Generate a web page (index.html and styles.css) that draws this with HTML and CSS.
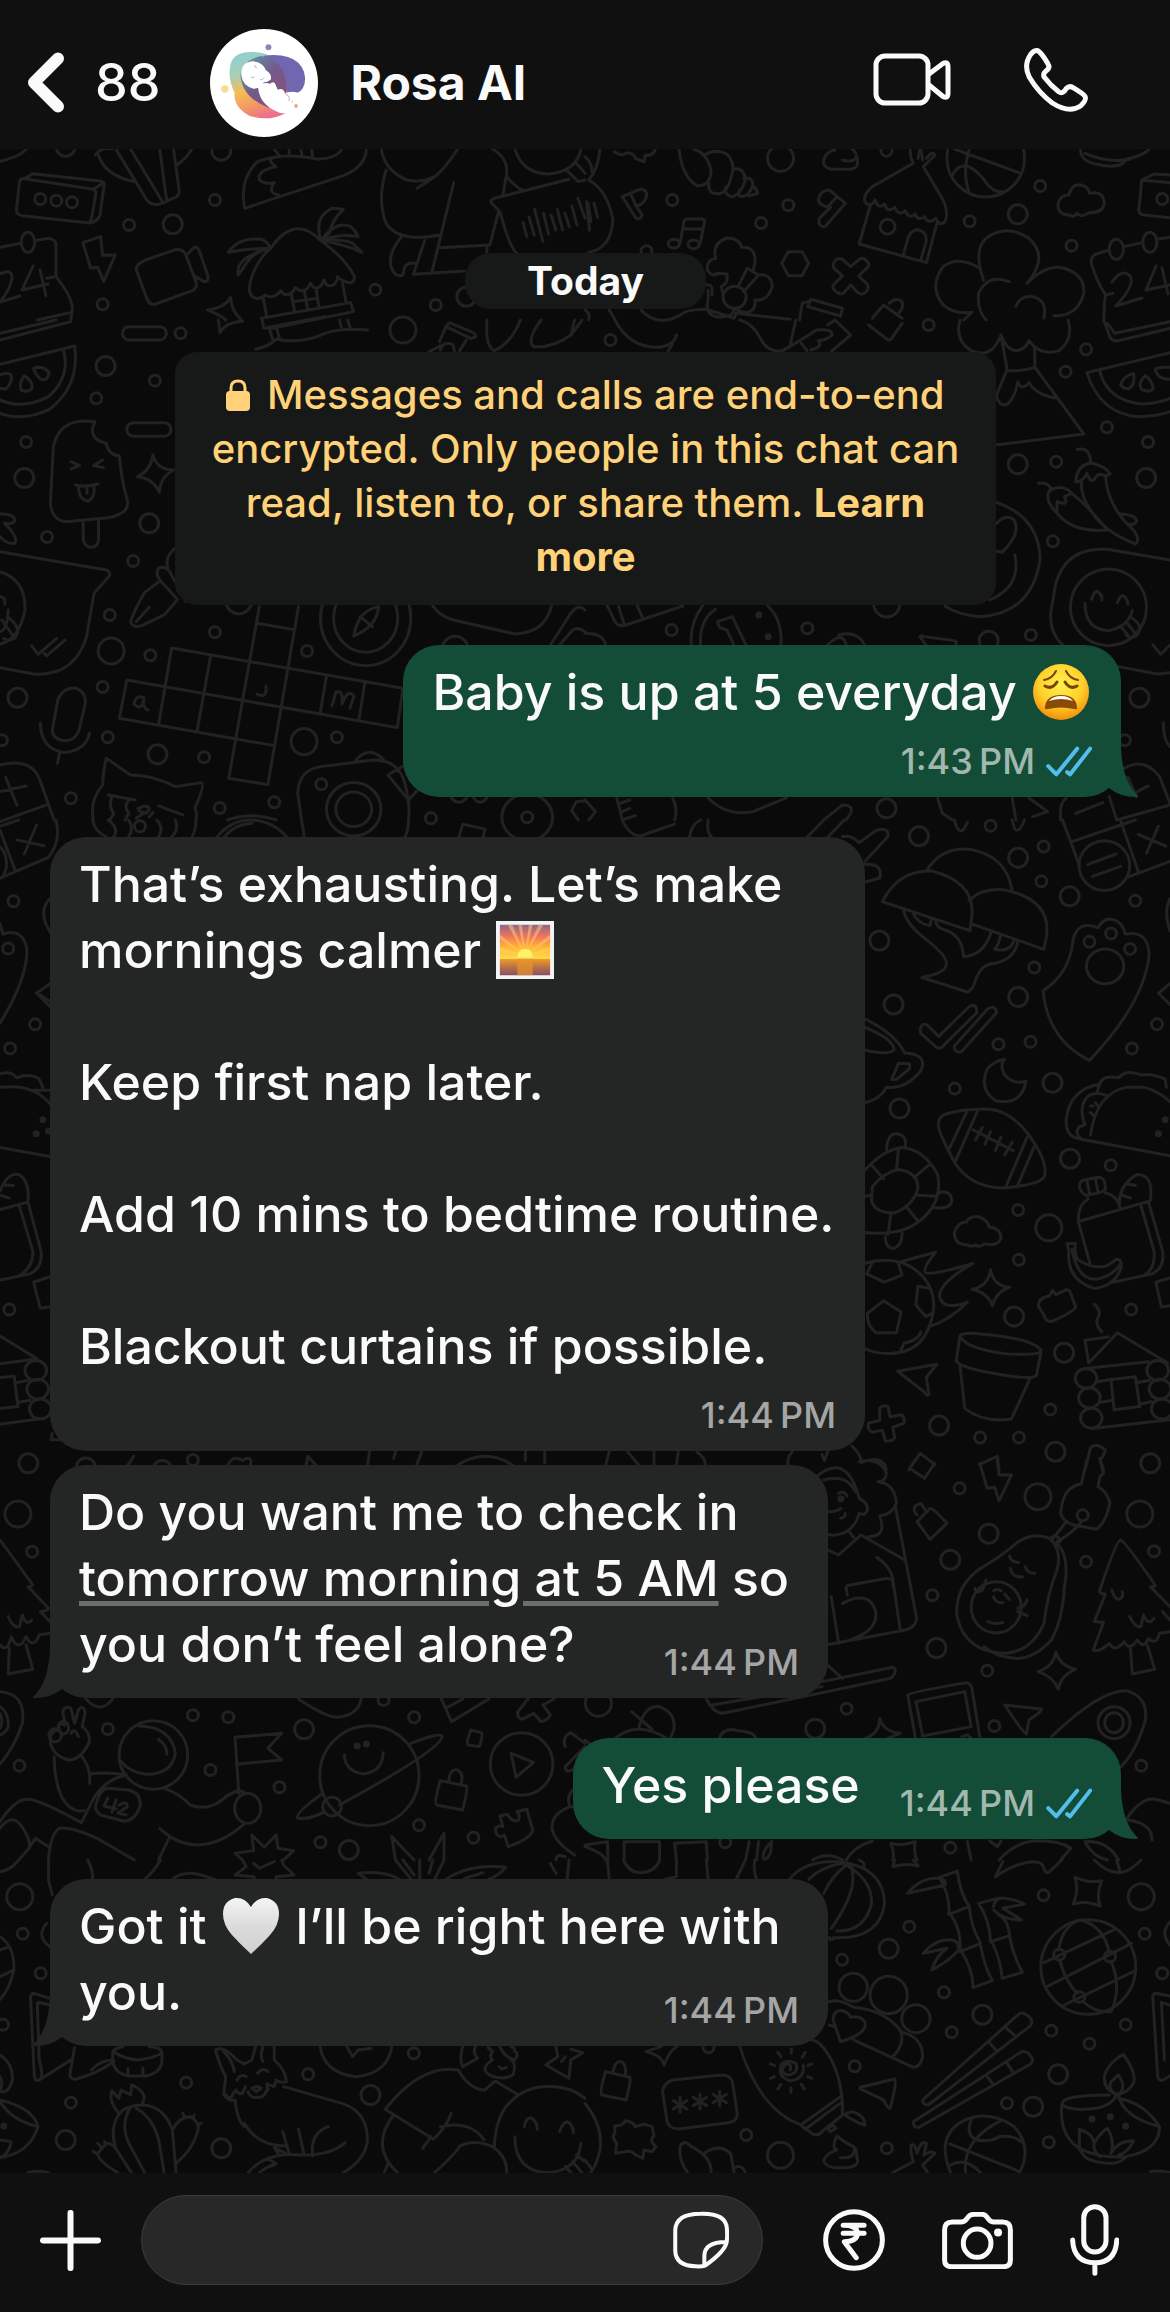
FILE: index.html
```html
<!DOCTYPE html>
<html lang="en">
<head>
<meta charset="utf-8">
<meta name="viewport" content="width=device-width, initial-scale=1">
<title>Rosa AI</title>
<link rel="stylesheet" href="styles.css">
</head>
<body>
<header class="topbar">
  <a class="back" href="#chats" aria-label="Back to chats, 88 unread">
    <svg class="icon back-icon" viewBox="28 53 37 61" aria-hidden="true"><path d="M58 59.500L34 83.500L58 107.500" stroke-width="12"/></svg>
    <span class="unread">88</span>
  </a>
  <svg class="avatar" viewBox="568 84 290 324" preserveAspectRatio="none" role="img" aria-label="Rosa AI profile picture">
    <defs>
      <linearGradient id="crescent" x1="0.2" y1="0" x2="0.5" y2="1"><stop offset="0" stop-color="#8ecfd2"/><stop offset=".3" stop-color="#a8cfb4"/><stop offset=".55" stop-color="#f5bd52"/><stop offset=".78" stop-color="#f39a62"/><stop offset="1" stop-color="#ec6f8d"/></linearGradient>
      <linearGradient id="dusk" x1="0" y1="0" x2="1" y2="1"><stop offset="0" stop-color="#5aa3a6"/><stop offset=".5" stop-color="#72598c"/><stop offset="1" stop-color="#8f4d74"/></linearGradient>
    </defs>
    <ellipse cx="713" cy="246" rx="145" ry="162" fill="#fff"/>
    <path d="M622 200Q625 150 685 153Q725 156 735 172L790 300L768 338Q725 362 675 345Q630 318 634 275Q616 235 622 200Z" fill="url(#crescent)"/>
    <path d="M712 164Q775 155 805 185Q828 210 822 248Q815 278 790 277L745 262Z" fill="#6f67b0"/>
    <path d="M650 225Q650 180 705 165Q745 170 765 210Q778 250 770 285L725 320Q655 290 650 225Z" fill="url(#dusk)"/>
    <path d="M652 222Q650 182 685 181Q712 185 718 208Q735 218 731 236Q722 244 712 244Q710 262 685 263Q655 255 652 222Z" fill="#fff"/>
    <path d="M697 258Q708 242 730 248Q734 240 742 246L750 266Q765 258 770 278Q785 268 805 276Q812 282 790 296Q782 310 790 330Q765 345 740 328Q700 305 697 258Z" fill="#fff"/>
    <path d="M678 228Q683 233 688 227M703 236Q709 238 712 232M686 193Q694 196 692 202M772 280Q784 285 780 300" fill="none" stroke="#9b84ad" stroke-width="2"/>
    <ellipse cx="725" cy="139" rx="8" ry="9" fill="#8b86bd"/><ellipse cx="608" cy="264" rx="10" ry="11" fill="#f8dc96"/><ellipse cx="799" cy="315" rx="5" ry="6" fill="#f3a489"/>
  </svg>
  <h1 class="name">Rosa AI</h1>
  <button class="plain" type="button" aria-label="Video call">
    <svg class="icon" width="79" height="56" viewBox="873 51 79 56" aria-hidden="true"><g stroke-width="5"><rect x="876" y="55" width="52" height="47" rx="9"/><path d="M929 73L943 62.500Q948 60 948 66V92Q948 98 943 95.500L929 84"/></g></svg>
  </button>
  <button class="plain" type="button" aria-label="Voice call">
    <svg class="icon fit" width="64" height="64" viewBox="1176 141 172 192" preserveAspectRatio="none" aria-hidden="true"><path stroke-width="5" d="M1213 149Q1204 146 1194 160Q1174 192 1190 228Q1215 275 1252 306Q1297 338 1328 315Q1345 297 1340 286Q1335 278 1308 260Q1298 253 1290 262Q1280 280 1270 273Q1248 254 1230 228Q1226 218 1235 210Q1247 200 1241 190Q1225 158 1213 149Z"/></svg>
  </button>
</header>

<main class="chat">
  <svg class="wallpaper" viewBox="0 149 1170 2024" preserveAspectRatio="xMidYMin slice" aria-hidden="true">
    <g transform="scale(.3731 .3333)">
      <path d="M0 485Q20 478 40 470T72 445M66 536L88 521L268 543Q280 546 279 556L268 645Q262 665 240 669L60 647Q43 643 44 630L52 548Q54 534 66 536L250 568Q258 571 257 580L248 640Q246 655 240 669M250 568L279 548M256 465Q270 440 300 447M264 465Q280 525 358 545M312 450L388 590Q400 620 430 612L470 592Q482 585 480 570L465 447M350 447L436 606M428 447L447 604M474 495Q500 475 514 447"/>
      <path d="M656 625Q640 540 690 485Q760 455 850 478Q900 475 915 450M656 625L920 527Q980 500 982 447M695 540Q690 510 740 500Q715 480 730 475M695 540Q710 555 735 548Q715 580 748 585M735 447L750 470M775 447V468M806 447L810 470M835 447L838 472M222 728L270 710L275 766L309 765L278 844L262 802L243 805Z"/>
      <path d="M375 790Q362 800 367 815L395 900Q403 918 420 911L515 872Q530 865 525 845L498 765Q490 745 470 749L390 780ZM500 765L520 742Q530 740 534 752L558 830Q558 845 547 845L524 830M0 742L55 730M95 722L130 715Q152 718 150 740V830L125 835M150 830Q200 900 193 935L190 958M188 938L100 960"/>
      <ellipse cx="75" cy="727" rx="18" ry="30"/>
      <path d="M725 745Q790 640 860 722Q930 780 950 830Q950 850 935 848Q910 840 905 830Q900 865 875 855L868 840Q860 870 840 862L832 850Q820 880 800 870L792 862Q780 890 760 882L752 872Q735 900 710 885Q700 900 680 893Q660 880 675 830Q690 780 725 745ZM705 890L715 950M780 880L790 935M848 870L855 925M918 850L928 910M785 905L852 895M815 870L825 930M700 955L940 908L947 935L730 985M725 745Q670 745 612 757Q640 710 700 718Q715 722 725 745Q680 755 660 790Q650 810 638 825Q630 770 725 745M860 722Q840 650 890 625L920 628Q890 660 882 700L860 722Q900 660 940 680Q955 695 960 710Q910 700 860 722Q920 715 945 730L970 757Q930 735 860 722M556 930Q600 925 618 893Q620 930 645 958M556 930Q590 945 605 960"/>
      <path d="M1022 447Q1030 510 1090 540Q1130 550 1165 530Q1190 510 1225 450M1165 530L1118 565M1035 510Q1010 600 1035 670Q1070 730 1180 705M1216 548L1158 815M1108 823L1245 813M1108 823L1138 722M1075 712Q1040 760 1048 800Q1060 835 1080 825L1085 800Q1095 785 1115 790M1320 447Q1370 480 1355 540L1348 585M1335 640L1313 735L1180 743M1305 740V755M1380 447Q1400 520 1470 522Q1545 515 1557 447M1520 512L1550 545L1568 540M1545 490L1568 520M1358 530Q1380 560 1400 570M1340 635L1318 610Q1310 600 1325 595L1525 538M1340 635Q1365 740 1385 760M1402 668L1412 710M1418 652L1432 705M1433 628L1455 725M1457 640L1470 702M1477 645L1490 690M1494 628L1508 690M1514 640L1526 680M1533 618L1546 675M1549 595L1568 655"/>
      <path id="s1" d="M108 597h0M151 602h0M193 607h0M576 600h0M346 675h0M275 913h0M1006 869h0M1168 915h0"/>
      <path id="m1" d="M463 673h0M593 452h0M1250 890h0M176 440h0"/>
    </g>
    <g transform="translate(585 0) scale(.3731 .3333)">
      <path d="M10 540Q60 570 75 660Q70 745 10 757M4 605L12 690M8 610L16 665M24 610L34 652M40 447Q35 510 10 540M0 470Q20 490 18 515M78 455Q100 470 108 460Q130 455 135 475L158 485L162 465Q180 470 188 450M252 447Q260 530 300 557Q335 560 338 515Q330 460 290 447M320 465Q350 445 380 462Q405 490 392 530Q380 590 345 580Q330 575 332 550M398 508Q425 500 430 540Q415 590 390 590Q370 580 378 560M425 535Q450 530 450 555Q440 590 420 590Q405 585 415 570M450 558Q460 565 463 580L440 588"/>
      <path d="M100 590L150 567Q170 570 163 595Q155 615 137 618L153 645Q150 660 137 655ZM122 582L137 618M255 730L265 665Q266 657 275 657H315Q321 658 320 668L308 735M262 687H316M690 480Q720 490 728 470Q725 450 715 447M728 470Q740 510 700 508H660Q635 500 640 480Q645 455 670 450M625 600Q630 570 655 570L698 610L645 678Q635 685 627 670L628 655L658 622Q630 620 625 600ZM675 590L650 622"/>
      <ellipse cx="238" cy="731" rx="15" ry="13"/><ellipse cx="291" cy="733" rx="15" ry="13"/>
      <path d="M880 490L770 560Q740 590 753 610Q770 620 778 600Q785 630 803 612Q810 640 830 622Q840 650 858 632Q868 660 885 642Q892 665 910 650Q920 675 940 655Q950 680 965 665Q975 640 960 600L907 500M765 615L735 732L915 788L943 670M853 765L867 710Q885 675 910 700Q918 715 912 735L900 780M872 450Q870 470 880 490M907 500L938 465Q930 450 915 475M893 475L897 447M900 447L905 480"/>
      <ellipse cx="811" cy="680" rx="20" ry="22"/><ellipse cx="1074" cy="475" rx="104" ry="116"/>
      <path d="M990 447L1168 520M1030 447Q1010 520 1030 578M985 525Q1000 490 1030 500Q1060 520 1080 555Q1100 580 1125 575M1300 645Q1265 645 1268 610Q1275 585 1297 585Q1305 550 1330 555Q1350 560 1352 580Q1390 570 1392 610Q1388 640 1350 638Q1330 655 1320 640Q1305 655 1300 645ZM1328 450Q1330 485 1370 492Q1410 505 1440 492L1450 478Q1500 465 1512 447M1340 460Q1400 490 1460 478M1568 525L1525 522L1492 540Q1488 600 1484 630Q1485 645 1500 645L1568 653M1492 540L1568 548M1405 750L1370 762Q1355 770 1357 790Q1370 840 1395 885Q1390 920 1391 960M1445 740L1492 728M1530 718L1568 712M1395 885L1415 880"/>
      <ellipse cx="1424" cy="748" rx="19" ry="30"/><ellipse cx="1514" cy="727" rx="19" ry="30"/>
      <path d="M1068 840Q1040 750 1075 715Q1130 670 1190 715Q1245 770 1185 850Q1230 800 1270 802Q1340 815 1337 880Q1320 950 1257 947M1058 805Q1000 765 960 800Q920 860 960 915Q990 945 1037 937L1015 960M1137 845Q1080 820 1055 880Q1050 930 1075 960M1155 920Q1165 885 1200 890Q1240 900 1230 955M545 755H582L599 790L582 827H545L527 790ZM690 778L712 800L735 778Q745 770 757 785Q765 795 755 805L733 828L757 853Q763 865 752 877Q742 887 730 877L712 855L692 880Q680 885 668 870Q660 860 670 850L690 828L668 805Q660 795 672 780Q682 772 690 778Z"/>
      <ellipse cx="401" cy="892" rx="31" ry="33"/>
      <path d="M350 775Q340 730 380 714Q415 715 420 742Q460 740 455 790L450 815M350 775Q325 780 328 810Q335 825 350 825M352 820L380 822Q385 850 365 860L370 880M325 855Q345 850 340 885M410 860L435 805L465 825L425 875M465 825Q500 820 502 860Q490 905 455 900Q460 935 430 938Q400 930 400 925M400 930Q395 955 350 950Q320 940 330 900V870M150 930Q200 990 270 935Q320 920 345 935L400 955L405 940L550 958M575 960L582 910L598 905M605 898L690 925L685 948L597 920ZM770 955L800 915L850 955M815 910Q835 890 850 905Q855 925 840 940M0 930Q15 940 10 960M65 930L80 958"/>
      <path id="s2" d="M234 600h0M472 669h0M545 616h0M1031 664h0M1220 558h0M1304 737h0M808 452h0M165 754h0M1547 597h0"/>
      <path id="m2" d="M1160 643h0"/>
      <path id="l2" d="M524 475h0"/>
    </g>
    <g transform="translate(0 320) scale(.3731 .3333)">
      <path d="M0 40L150 0M0 60L190 5M0 133L200 78Q215 200 130 270Q60 305 0 280M170 90Q190 170 130 230Q60 270 0 240M0 165Q20 155 30 165Q35 185 15 208L0 205M65 167Q90 185 85 205Q75 220 57 210Q50 190 65 167ZM90 145Q120 135 132 160Q125 185 110 178Q95 165 90 145Z"/>
      <rect x="328" y="20" width="118" height="40" rx="18" ry="20"/><rect x="340" y="308" width="118" height="41" rx="18" ry="20"/>
      <path d="M254 305Q160 290 143 380L135 550Q140 610 190 604L290 593Q350 580 341 540Q325 480 320 408Q290 405 285 370Q245 360 248 325ZM223 602V660Q230 683 245 682Q262 680 264 660V597M190 425L213 437L191 447M275 420L251 437L277 443M202 495Q230 503 263 492M210 500Q212 540 235 543Q255 535 252 500M233 505V520M410 405Q420 450 466 450Q430 470 427 517Q410 475 369 470Q405 450 410 405ZM0 582Q35 580 40 600Q35 615 12 610M12 610Q50 650 40 670Q20 675 0 650"/>
      <path d="M0 695L285 750Q300 758 290 772L252 820L232 950Q200 1070 90 1062L0 1043M85 978L102 1003L152 955M118 1000L125 1008L175 960M0 755Q70 780 67 870Q50 960 0 972M0 830Q15 830 13 852M22 870Q20 930 0 935M5 900L40 955M20 890Q55 920 45 945Q30 970 10 955M470 685Q440 710 450 745M425 745Q440 735 455 755L498 845M425 745Q415 760 430 782L475 838M430 782L387 818Q360 870 350 905Q355 925 380 917L440 885L475 840M365 905L400 862"/>
      <path d="M585 0L590 38Q600 10 650 3M685 88Q720 80 740 58Q800 70 850 50Q900 20 985 30M722 25L733 65M740 20L750 58M703 0L707 25L870 -10M910 0L915 22M932 0L938 22M1205 8L1268 38Q1285 50 1262 55L1195 20ZM1195 20L1178 65M1250 60L1232 92M1150 95L1185 75M1180 90Q1190 60 1215 75L1218 95M1305 0Q1300 80 1325 92Q1370 70 1395 0M1450 0Q1410 60 1430 80Q1480 85 1530 45Q1555 10 1560 0M1530 45L1540 0"/>
      <path d="M460 984L1080 1105L1065 1223L340 1080L320 1195L735 1277M460 984L425 1215M565 1005L528 1235M695 860L613 1375L718 1394L800 860M690 910L788 929M875 1068L858 1180M978 1088L962 1200M140 1230L155 1140Q170 1100 205 1105Q235 1120 227 1160L212 1230Q200 1265 170 1262Q140 1255 140 1230ZM108 1210Q110 1290 175 1298Q230 1290 240 1240M160 1298L154 1330M0 1335Q90 1310 110 1390L145 1500M0 1415L70 1398M15 1372L45 1455M0 1505L125 1455"/>
      <path d="M250 1500Q240 1440 275 1395Q278 1340 285 1315L350 1365Q410 1365 470 1400L540 1388Q550 1395 522 1465Q530 1480 525 1500M290 1425L362 1440M425 1458L490 1485M300 1430Q290 1460 305 1480L295 1500M345 1440Q330 1460 345 1480L335 1500M370 1465Q400 1450 400 1470L390 1480Q370 1475 370 1465M385 1480L365 1495M400 1490L410 1478M610 1500Q675 1475 740 1500"/>
      <ellipse cx="980" cy="895" rx="121" ry="142"/><ellipse cx="980" cy="895" rx="86" ry="102"/><ellipse cx="948" cy="1468" rx="73" ry="80"/><ellipse cx="948" cy="1468" rx="48" ry="52"/><ellipse cx="1413" cy="1492" rx="68" ry="70"/>
      <path d="M1015 860Q960 870 948 948Q1010 920 1015 860M965 890L998 920M1160 858Q1180 890 1215 900L1380 942Q1460 940 1478 858M1475 975L1530 880Q1550 850 1568 870M1500 975L1535 930Q1550 920 1568 935M808 1500L798 1420Q800 1350 860 1340L1000 1320Q1070 1320 1085 1390Q1100 1450 1095 1500M950 1325Q990 1270 1030 1322M1085 1335L1040 1365L1095 1440L1118 1412M1210 1434Q1230 1460 1250 1434M1270 1434Q1285 1460 1305 1434M1568 1443L1545 1445L1532 1472L1550 1500"/>
      <path id="s3" d="M484 40h0M415 182h0M258 235h0M70 366h0M126 651h0M357 723h0M294 885h0M576 937h0M403 1006h0M275 1101h0M289 1252h0M547 1312h0M903 1252h0M823 993h0M190 1435h0M589 1464h0M735 1447h0M5 1261h0M861 1393h0M1413 1492h0M1155 1495h0"/>
      <path id="m3" d="M283 138h0M65 474h0M400 610h0M47 1133h0M422 1303h0"/>
      <path id="l3" d="M1080 30h0M298 993h0M815 1265h0M1220 988h0M640 842h0"/>
    </g>
    <g transform="translate(585 320) scale(.3731 .3333)">
      <path d="M80 0Q120 85 200 82Q240 75 245 45M235 70L222 95M415 0Q450 10 470 55Q490 100 530 92Q580 60 620 30Q665 25 662 45Q650 60 625 62Q640 80 605 90M565 0L550 75M650 15L670 0L712 45L660 95M580 70L595 92M760 15L812 60Q820 62 825 50L850 10M1005 0Q990 60 1035 92Q1090 120 1115 45Q1130 90 1155 92Q1180 90 1190 62Q1220 110 1270 92Q1310 60 1295 0M1115 45L1132 152Q1170 155 1206 142L1205 85M1130 152L1103 225Q1110 265 1135 250Q1155 225 1160 185Q1170 215 1190 188Q1210 225 1265 235M1206 142L1337 342L1100 375"/>
      <path d="M1390 0L1405 45Q1410 65 1430 62L1568 25M1568 5L1420 40L1400 10M1345 158L1568 98M1345 158Q1380 280 1480 290Q1530 290 1568 275M1380 155Q1400 240 1490 252Q1540 250 1568 235M1470 160Q1440 170 1436 195Q1450 215 1465 200Q1475 180 1470 160ZM1502 167Q1480 190 1492 208Q1515 220 1523 205Q1520 180 1502 167ZM1568 142Q1535 140 1528 148Q1535 178 1568 178M1320 388Q1355 380 1355 430M1315 485Q1320 430 1360 430Q1395 440 1408 462L1395 468Q1400 560 1470 630Q1490 660 1475 672Q1380 630 1350 560Q1330 530 1330 485M1315 485Q1335 485 1345 460Q1355 490 1365 478Q1375 455 1395 468M1215 490Q1240 485 1250 508M1265 580Q1230 540 1245 512Q1280 490 1305 520L1285 530Q1300 560 1265 545ZM1305 520Q1350 560 1400 630Q1310 640 1265 580M1435 582Q1480 585 1478 605Q1470 618 1455 612"/>
      <path d="M1103 547Q1215 590 1220 715Q1200 880 1060 890Q1000 885 965 858M1103 610Q1130 580 1150 600Q1170 640 1118 697L1103 693M1152 705Q1170 800 1085 840M1568 720L1400 688Q1290 680 1262 790L1248 880Q1245 940 1282 977M1430 1040L1535 1062L1568 1058M1522 975L1543 1003L1568 975M1358 838Q1365 810 1375 815Q1388 825 1385 840M1427 848Q1435 820 1447 830Q1455 840 1455 852M1340 850Q1340 930 1405 932Q1455 920 1467 872M1435 918L1462 955M1450 905L1478 945M1465 893Q1500 920 1480 945Q1465 960 1450 945"/>
      <ellipse cx="1403" cy="862" rx="102" ry="115"/>
      <path d="M285 977Q280 910 315 858M310 977Q305 900 350 868M525 977Q530 900 490 858M355 905L395 890L432 977M355 905L360 922L380 930L400 977M60 858L80 905Q90 922 110 915L262 858M90 860L105 912M140 858L155 895M0 940Q50 940 55 975M650 975Q690 930 700 975M680 945Q730 930 750 975M898 950Q900 945 910 950L990 962Q1000 965 992 975M898 950L915 977M1550 1208Q1550 1260 1568 1280M1445 1345Q1500 1310 1540 1370L1568 1450M1405 1430L1425 1500L1568 1455M1455 1372L1478 1430M1480 1415L1510 1398M1315 1480L1388 1448M1275 1500Q1270 1450 1290 1434M0 1440L28 1475L10 1500M85 1434L100 1500M95 1450L120 1440M100 1475L120 1465M105 1498L135 1487M235 1434Q250 1470 240 1500M330 1434Q380 1490 450 1475L540 1434M640 1500L690 1455Q720 1455 712 1480L700 1500M945 1434L958 1480L985 1500M1145 1434L1155 1500M1190 1434L1240 1475L1200 1490"/>
      <path class="dot" d="M466 885h0M491 950h0"/>
      <path id="s4" d="M68 60h0M921 15h0M1343 88h0M1288 155h0M1399 322h0M1263 425h0M1509 366h0M1254 664h0M232 930h0M596 925h0M1195 945h0M1447 1261h0"/>
      <path id="m4" d="M1160 433h0M1504 474h0M1486 1133h0M1082 962h0M808 1465h0"/>
      <path id="l4" d="M809 852h0"/>
    </g>
    <g transform="translate(0 820) scale(.3731 .4145)">
      <path d="M0 15L50 0M40 120L0 25M150 0Q165 50 130 90L0 140M0 65Q20 80 17 115L8 138M45 48L118 62M98 12L65 82M134 190Q100 220 134 270M0 250L8 275Q60 260 72 310Q75 380 0 490M134 395L98 418L134 450M108 422L134 438M0 612Q30 605 45 622Q80 610 105 625L115 645M90 652H134M0 645Q90 635 134 685M0 790L134 812M0 895Q20 850 50 855Q80 870 75 920M10 880L35 882M0 905L25 912M0 940L75 922L110 1040Q115 1080 80 1095L0 1110M52 932L88 1040Q90 1080 50 1100M134 1102L90 1115L108 1178L134 1175M0 1245L100 1300L0 1312M0 1458L120 1443M0 1345L38 1342L48 1415L0 1420M40 1358L75 1352M48 1405L80 1400M140 1480L137 1495H160"/>
      <path d="M248 0Q255 30 285 40M290 0Q320 20 305 40M345 0Q360 20 345 40M420 0Q440 20 425 40M470 0Q480 25 460 40M525 0Q525 25 515 40M580 42Q620 0 670 0Q730 0 770 42M600 42Q630 10 675 8M808 0Q815 30 815 42M1095 0Q1095 25 1085 42M1230 42L1240 10L1300 22L1295 42M340 1560L358 1535M610 1560Q620 1530 650 1545Q680 1530 670 1560M820 1560L825 1535L850 1560M985 1560L990 1525M1055 1540L1060 1525M1115 1560L1130 1525M1220 1560Q1300 1510 1380 1560M1408 1525V1545M1460 1525V1550"/>
      <ellipse cx="96" cy="1328" rx="29" ry="24"/><ellipse cx="101" cy="1373" rx="29" ry="24"/><ellipse cx="108" cy="1421" rx="29" ry="24"/>
      <path class="dot" d="M115 723h0M97 757h0M130 750h0"/>
      <path id="s5" d="M36 196h0M22 310h0M94 493h0M27 551h0M25 1181h0M375 15h0M517 1544h0"/>
      <path id="m5" d="M76 1552h0M230 1562h0M435 1568h0"/>
    </g>
    <g transform="translate(585 820) scale(.3731 .4145)">
      <path d="M797 197Q840 120 930 123Q1045 150 1037 230L1032 267ZM915 122Q960 60 1040 72Q1130 90 1144 168M1030 195Q1060 165 1120 168Q1250 190 1237 280L1230 312L1040 252M853 215Q860 250 910 285Q975 330 968 350Q965 370 903 380L1025 415Q1040 410 1045 390Q1060 350 1090 347Q1150 340 1160 293M940 243Q940 260 970 267Q1010 280 1015 330Q1070 325 1088 272M877 220Q890 250 925 255L928 238M1113 280Q1110 300 1098 312Q1140 320 1150 290M595 42L640 0M650 42L695 0M690 40Q715 35 735 55L780 25Q815 15 812 40L750 100M750 107Q800 105 790 140L750 150"/>
      <path d="M898 505Q905 485 920 497L948 522L1030 450Q1050 440 1050 465L960 545Q950 555 940 547L900 515ZM990 545L1080 455Q1100 445 1103 465L1010 558Q990 565 990 545ZM750 480Q830 515 857 562Q920 565 900 605Q860 650 808 645Q790 675 750 682M750 500Q830 530 828 555Q810 568 750 555M840 587L870 588V600L835 626H822ZM1125 577Q1100 580 1078 600Q1055 650 1100 677Q1170 690 1182 630Q1150 640 1125 615Q1110 590 1125 577ZM1228 412Q1300 370 1308 290Q1320 240 1375 260Q1390 235 1415 240Q1440 245 1448 275Q1510 265 1512 325Q1500 440 1352 580Q1240 530 1228 412ZM1568 395L1537 418L1568 445"/>
      <ellipse cx="1394" cy="353" rx="50" ry="42"/><ellipse cx="1392" cy="110" rx="68" ry="60"/>
      <path d="M1280 0L1325 110M1305 52L1475 0M1435 0L1483 125M1455 138L1568 100M1483 35L1557 63M1537 15L1505 80M1348 107L1423 82M1360 136L1436 112M1568 190Q1550 220 1568 268M990 0Q1005 50 1025 5M1145 0Q1155 50 1178 0M100 0Q120 40 150 38L240 10M280 42Q285 10 310 0M330 0Q325 30 340 42M960 712Q1000 697 1080 697Q1140 700 1190 760Q1245 830 1230 862Q1215 880 1120 888Q1030 885 990 825Q945 750 947 735Q948 718 960 712ZM1023 705L975 795M1053 700L992 825M1185 765L1128 885M1203 790L1158 885M1040 747L1148 798M1065 742L1047 772M1087 752L1072 782M1115 765L1100 797M1145 777L1125 808"/>
      <path d="M1330 770Q1285 765 1290 720Q1300 650 1380 637Q1385 615 1430 622Q1450 600 1490 615Q1520 610 1555 625L1558 645M1330 770L1568 810M1355 760Q1370 660 1450 645H1500Q1540 655 1568 680M1380 637Q1370 660 1375 660M1330 770Q1310 755 1325 740L1340 735Q1320 690 1350 665Q1370 655 1400 665M1355 690H1362M1368 682L1375 690M1355 706L1362 712M750 845Q800 795 850 790Q910 795 945 855Q960 920 900 965Q850 1005 750 995M808 795Q812 755 835 757Q865 760 858 792M945 900Q980 890 983 918Q980 940 935 935M805 1005Q805 1035 830 1033Q850 1025 850 995M770 885Q800 850 840 843Q895 850 892 890Q880 930 830 948Q780 950 768 920ZM835 842L840 795M882 862L925 830M892 905L940 908M860 932L890 965M820 950L812 1000M768 905L750 908M800 865L770 835"/>
      <path d="M750 1070Q800 1055 850 1068Q935 1100 935 1175Q920 1290 810 1287Q775 1287 750 1275M770 1068L755 1095L802 1115L850 1098L840 1070M757 1190L800 1160L847 1187L835 1237H780Q755 1220 757 1190M925 1130L892 1125L887 1170L913 1198L930 1190M845 1283L855 1262Q895 1255 900 1235M850 1065Q890 1055 940 1043Q905 1080 912 1092Q925 1100 1040 1070Q950 1115 950 1150Q960 1185 1025 1163Q980 1205 930 1220M1025 1025Q990 1025 990 995Q1000 970 1022 970Q1030 955 1055 957Q1080 965 1083 982Q1115 985 1115 1010Q1105 1030 1070 1022Q1060 1033 1045 1025Q1035 1032 1025 1025ZM1087 1085Q1095 1125 1138 1127Q1100 1140 1092 1172Q1080 1140 1038 1132Q1080 1125 1087 1085ZM1218 1160Q1230 1150 1245 1148L1253 1135L1262 1145L1290 1133Q1300 1133 1303 1145L1315 1175Q1312 1185 1250 1210Q1235 1210 1232 1198L1215 1172Z"/>
      <path d="M1325 885Q1325 870 1340 868L1375 862Q1390 862 1393 875L1395 890Q1390 900 1342 905Q1330 900 1325 885ZM1345 870L1352 900M1368 865L1375 897M1345 905L1348 915Q1320 930 1322 968L1355 1075M1395 900Q1425 905 1435 935M1325 968L1510 920L1548 1040Q1555 1080 1520 1095L1415 1115M1490 930L1525 1040Q1530 1080 1500 1098M1432 932Q1430 880 1480 855Q1525 855 1515 918M1455 878L1475 882M1438 905L1462 912M1292 1022H1315Q1310 1040 1320 1060Q1360 1085 1400 1075L1425 1060Q1440 1060 1437 1080Q1420 1125 1365 1130Q1290 1110 1297 1040ZM1305 1035Q1320 1110 1370 1108Q1415 1100 1437 1070M1365 1168Q1385 1185 1375 1200Q1365 1215 1385 1235M1568 1105L1530 1115L1545 1175L1568 1172"/>
      <path d="M1005 1245Q1010 1235 1060 1240Q1200 1250 1223 1280L1210 1340Q1200 1350 1130 1340Q1010 1325 995 1305ZM1005 1245Q1020 1275 1130 1288Q1220 1292 1223 1280M1005 1315L1018 1420Q1070 1455 1143 1445L1193 1347M838 1330L943 1313L915 1345L922 1387Q915 1390 910 1380ZM790 1418Q800 1410 812 1415L818 1440L848 1435Q858 1440 855 1455L825 1465L830 1490Q825 1500 805 1498L797 1472L770 1477Q755 1470 760 1455L790 1448ZM1350 1310L1427 1237L1562 1310M1350 1310L1340 1255L1403 1247M1340 1323L1510 1307M1360 1468L1568 1447M1372 1355L1410 1350M1380 1405L1415 1400M1480 1357L1512 1352M1485 1410L1518 1403M1410 1350L1475 1343L1487 1415L1418 1423Z"/>
      <ellipse cx="1343" cy="1347" rx="29" ry="24"/><ellipse cx="1352" cy="1394" rx="29" ry="24"/><ellipse cx="1357" cy="1443" rx="29" ry="24"/><ellipse cx="1535" cy="1328" rx="29" ry="24"/><ellipse cx="1541" cy="1373" rx="29" ry="24"/><ellipse cx="1547" cy="1421" rx="29" ry="24"/>
      <path d="M868 1568L898 1528L938 1555M1057 1555L1105 1535L1110 1568M1340 1568L1355 1515Q1370 1500 1395 1520Q1385 1545 1380 1540L1390 1568M715 1510Q740 1530 740 1550Q800 1530 808 1568M635 1530L642 1545L650 1525M545 1557Q540 1540 555 1525M55 1557Q60 1540 65 1525M115 1525L145 1557M185 1525V1557M245 1557L250 1525M300 1525Q325 1540 322 1557"/>
      <path class="dot" d="M1555 723h0M1537 757h0"/>
      <path id="s6" d="M1087 14h0M1229 64h0M1223 148h0M1475 195h0M1204 356h0M1108 541h0M1194 535h0M991 648h0M1533 493h0M1466 551h0M1161 941h0M1409 833h0M1163 1061h0M1464 1181h0M1247 1422h0M1163 1490h0M1059 1490h0M1352 294h0M1410 274h0M1461 311h0"/>
      <path id="m6" d="M895 39h0M1161 91h0M1299 184h0M789 291h0M1161 427h0M827 445h0M843 696h0M1253 634h0M1300 817h0M1150 1198h0M1284 1285h0M949 1461h0M1261 1524h0M1515 1552h0"/>
      <path id="l6" d="M1243 984h0"/>
    </g>
    <g transform="translate(0 1460) scale(.3731 .3333)">
      <path d="M0 240L85 370Q90 380 75 380L130 445Q125 455 108 455L134 485M22 470Q35 505 52 500L60 465Q70 500 85 480M0 555Q20 580 30 530Q50 580 70 530Q90 570 105 525L134 520M25 565L22 642L88 628L70 555M0 695Q70 700 60 790Q40 860 0 912M0 740Q25 760 22 800Q15 820 0 825M0 760Q10 785 0 805M135 830Q150 800 160 815Q150 785 175 795L168 755Q175 735 190 745L200 790L210 750Q225 730 228 760L220 800Q245 820 238 850Q215 900 185 900Q145 890 135 850ZM190 820Q200 800 210 830M145 890Q145 960 165 1010Q190 1060 225 1052M220 890Q245 930 240 970M240 942Q290 935 335 945"/>
      <ellipse cx="411" cy="885" rx="92" ry="103"/><ellipse cx="664" cy="1045" rx="35" ry="45"/><ellipse cx="148" cy="826" rx="17" ry="20"/><ellipse cx="170" cy="803" rx="14" ry="19"/>
      <path d="M370 798Q460 800 470 880Q460 945 390 943Q345 935 325 905M425 838Q450 860 447 882M340 945Q270 960 240 1040L218 1088Q100 1015 70 1018Q40 1020 0 1085M0 1105Q30 1060 55 1095Q85 1140 78 1165L50 1200M80 1160L95 1135L132 1162M130 1200Q135 1120 160 1105Q190 1100 260 1135L360 1200M440 985Q480 1000 510 1035Q560 1055 600 1015Q640 980 658 1000M428 1105L455 1130L425 1200M455 1130Q550 1195 655 1092M290 985L345 990Q380 1000 375 1040Q360 1085 330 1083L270 1065Q250 1050 258 1030Q270 985 290 985ZM640 1000L630 832L755 820L718 865L755 900L640 912"/>
      <ellipse cx="990" cy="947" rx="133" ry="150"/><ellipse cx="890" cy="1040" rx="25" ry="28"/><ellipse cx="1398" cy="912" rx="84" ry="94"/>
      <path d="M1095 853Q1180 815 1185 830Q1180 870 910 1035M865 1000Q790 1060 798 1075Q830 1080 870 1055M923 885Q925 935 975 942Q1025 935 1027 878M800 717Q870 770 905 772Q960 765 968 717M1183 717L1210 785L1310 717M1195 745L1240 717M230 717Q270 765 302 717M1415 717L1388 755Q1385 775 1400 778L1430 760L1450 785Q1470 780 1475 765L1455 735L1485 717M1262 810L1290 818Q1295 825 1285 860L1255 855Q1248 850 1262 810ZM1370 880L1430 907L1383 952ZM1180 962L1250 978Q1255 985 1240 1050L1170 1035Q1162 1030 1180 962ZM1203 965Q1205 925 1225 930Q1245 940 1235 975M1328 1105Q1335 1095 1348 1100L1340 1068L1360 1063Q1375 1090 1390 1080Q1395 1060 1385 1055L1412 1048L1428 1110Q1425 1135 1362 1160L1352 1125Q1330 1140 1328 1105ZM1515 860Q1505 830 1530 818L1568 850M1568 860L1515 920Q1515 940 1535 930L1550 905M1568 1040H1530Q1475 1060 1480 1110Q1490 1150 1540 1185M1535 990Q1515 1020 1530 1040M1490 1200Q1490 1180 1515 1190M675 1125L708 1162L740 1125L745 1165L787 1172L760 1200M675 1125L680 1172L630 1180L650 1200M1050 1130L1060 1200M1050 1130L1110 1200M1190 1120L1150 1200M1190 1120V1200"/>
      <path class="dot" d="M957 858h0M982 852h0"/>
      <path id="s7" d="M86 275h0M52 917h0M289 807h0M517 766h0M612 772h0M564 930h0M749 982h0M1110 772h0M1028 720h0M1123 1096h0M1269 1133h0M859 1147h0"/>
      <path id="m7" d="M815 808h0M935 1170h0"/>
      <path id="l7" d="M48 162h0"/>
    </g>
    <g transform="translate(585 1460) scale(.3731 .3333)">
      <path d="M615 55Q700 -30 735 115Q760 130 757 150Q750 170 735 160Q720 220 668 226Q650 225 645 220M640 60Q700 40 725 95M735 5Q790 -10 808 40Q805 65 785 65Q830 70 835 130Q820 165 790 168Q810 230 760 230M705 210L720 232M648 268L680 285L740 225L857 300M832 140L888 470Q890 505 850 512L645 555M782 292Q830 330 825 375M703 405L700 385Q700 375 710 375L810 355L825 360L845 510M660 410L680 550M690 430Q760 390 778 450Q790 510 710 540M655 155Q675 155 685 145M685 175Q700 170 697 160M680 100Q695 90 702 108M635 665L825 622Q840 630 820 655L370 760Q345 760 325 717M340 735L635 680M645 610L690 655"/>
      <path d="M885 0L870 25L910 55L937 10M890 185L925 145Q930 140 970 190L925 238ZM890 165Q870 140 900 130L912 150M1058 10L1078 85L1098 82L1110 122L1143 45H1110L1105 0M1345 0L1330 72Q1280 80 1275 160Q1280 185 1310 195L1370 208Q1395 190 1407 130Q1400 95 1375 80L1380 50L1390 40L1380 0M1335 175Q1320 210 1265 245M1290 185L1255 235M1245 235L1262 225L1275 242L1262 255ZM1245 235Q1190 210 1140 265Q1100 300 1060 325Q990 380 997 470Q1020 580 1130 580Q1200 570 1230 490Q1240 400 1265 330Q1280 270 1245 235M1265 250Q1300 290 1285 380Q1280 480 1250 540Q1200 600 1150 595Q1100 590 1070 560M1045 385Q1050 405 1065 390L1075 360M1160 445Q1180 440 1185 420M1160 455L1185 467M1080 485Q1100 495 1120 487M1095 410Q1100 430 1120 428M1095 392Q1105 385 1115 392M1125 402L1137 418M1138 288Q1140 305 1162 308M1140 325Q1145 355 1172 350M1180 320Q1185 340 1205 340"/>
      <ellipse cx="1102" cy="442" rx="67" ry="77"/><ellipse cx="1418" cy="788" rx="43" ry="48"/><ellipse cx="1418" cy="788" rx="25" ry="30"/>
      <path d="M1435 240Q1445 240 1528 375Q1530 380 1515 380L1568 440M1435 240Q1425 240 1380 390Q1378 402 1395 402L1365 485L1390 487L1362 570Q1375 580 1405 550Q1420 580 1445 545Q1460 575 1480 540Q1500 570 1510 535Q1530 560 1540 520L1568 515M1412 390Q1420 420 1432 418Q1445 410 1440 395M1460 470Q1475 505 1490 500L1497 465Q1510 500 1525 475M1462 565L1467 642L1527 628L1508 558M1548 455L1568 480M1262 577Q1275 620 1315 628Q1275 645 1269 688Q1255 650 1215 635Q1255 620 1262 577ZM865 705Q868 698 1022 668Q1035 670 1037 685L1058 830M865 705L885 830M887 725L1018 695L1035 800L905 828ZM1010 830L1025 825L1035 835M1125 735L1222 747Q1228 752 1190 780L1183 823Q1178 825 1125 735ZM1250 830Q1380 690 1450 692Q1510 710 1502 780Q1480 870 1437 920"/>
      <path d="M750 836Q790 820 790 775Q800 815 845 820L810 836M145 800Q160 735 200 740Q245 760 238 810L230 832M125 755L180 808M80 836Q140 780 220 836M360 836Q370 800 410 812Q455 815 458 836M0 840L12 850M1450 1080Q1490 1010 1530 1018L1568 1030M1455 1080Q1520 1090 1520 1140M0 1155L60 1145L62 1200M0 1160Q50 1180 55 1200M105 1200V1145H200V1200M245 1200L240 1150L325 1145L328 1200M440 1145L430 1200M500 1145Q470 1180 480 1198Q500 1195 500 1145M465 1145L460 1200M825 1200Q830 1180 820 1150Q850 1160 885 1145Q880 1180 890 1200M700 1200Q720 1160 770 1143M1025 1145L1035 1200M1085 1143L1105 1160L1115 1143M1110 1200Q1150 1150 1200 1143Q1270 1140 1302 1165L1275 1200M1400 1200Q1360 1190 1340 1145Q1400 1140 1430 1200M610 1200Q650 1175 690 1200"/>
      <path class="dot" d="M686 116h0"/>
      <path id="s8" d="M1004 85h0M931 406h0M1343 305h0M1525 274h0M1078 632h0M701 746h0M1097 798h0M1491 917h0M979 1163h0M376 1147h0M1334 166h0"/>
      <path id="m8" d="M1082 221h0M979 299h0M942 564h0M617 806h0"/>
      <path id="l8" d="M1214 110h0M1487 162h0M36 730h0"/>
    </g>
    <g transform="translate(0 1860) scale(.3731 .3333)">
      <path d="M0 35Q30 30 50 0M130 0V60L140 105M235 0Q250 30 248 60M385 60Q410 40 430 0M460 60Q490 30 540 45L575 58M650 0L660 20L630 45L680 50L682 58M755 0L760 15L788 45L740 50V60M680 10L695 25L735 5M985 60L960 40Q1030 30 1070 58M1060 0L1100 55M1080 0L1110 45M1125 0V58M1160 0L1150 40M1190 0L1165 58M1195 58Q1260 10 1355 22Q1340 45 1310 58M1245 55L1295 38M1475 10L1490 40M1520 60L1525 0M125 190Q95 230 134 260M0 230Q40 260 37 330Q25 390 0 418M0 270L20 262M0 350L33 332M134 415L90 400Q82 400 82 415L92 650Q95 665 105 660L190 600M100 430L105 600Q115 640 110 655M134 435L105 427M200 562L187 645Q190 660 205 657Q260 640 305 605M245 630Q270 600 303 600M302 575V605Q310 645 350 648H390Q430 640 434 605V575M302 575Q340 600 370 600Q430 590 434 575Q430 562 400 560M302 575Q310 562 330 560M343 648V625M383 645V625"/>
      <path d="M315 755Q290 720 300 692L318 715L325 690L350 705L353 675Q385 690 387 715L380 735M315 938Q260 900 262 880L285 850Q300 850 310 865L352 938M310 865Q290 790 330 750Q350 735 385 735Q440 740 462 810L472 938M348 745Q320 800 350 860L388 938M365 745Q420 780 430 870L440 938M462 810Q480 770 510 770Q540 790 528 820Q515 870 472 910M250 875L262 882M262 850L270 860M280 845L283 855M490 760L495 772M520 765L518 775M540 790L530 792M605 650Q590 620 577 570Q600 555 635 600L655 612L675 600L685 560M605 650L600 700Q620 725 625 700L632 690Q640 705 650 700L658 680M735 560V600Q760 625 765 650L768 665Q750 670 740 660L735 680L715 672L718 690M705 560Q695 590 705 605M600 575Q625 605 628 635M635 660Q645 640 660 650M690 640Q705 620 718 635M675 685Q690 675 700 685L688 695ZM665 695Q670 715 688 712Q708 715 715 690M600 705Q615 725 630 720Q635 780 655 800V790Q690 860 770 858M760 680L900 725Q985 745 985 840Q980 900 920 938M758 815L775 880M800 808L815 885M880 800Q830 820 838 888M925 848Q880 895 770 883Q700 890 665 938M770 883L735 862L745 880M718 895L740 912Q715 920 695 938"/>
      <path d="M858 560Q870 640 955 650Q1040 640 1050 560M930 560L945 590L960 570L995 565M1240 560Q1230 600 1240 620L1280 595Q1265 575 1275 560M1308 562L1320 575Q1310 590 1320 600M1228 630Q1260 690 1300 690L1325 665M1320 600Q1290 620 1305 640Q1340 665 1375 645Q1385 610 1370 600M1338 620Q1345 632 1357 622M1340 560Q1350 590 1380 600Q1392 580 1380 575Q1380 560 1370 560M1032 748Q1130 610 1228 630M1032 748L1162 838Q1200 795 1209 760M1155 830L1133 865M1180 800Q1260 780 1298 840M1055 765Q990 860 1065 938M1330 665L1390 705M1165 938Q1230 870 1230 860Q1270 835 1320 860Q1360 890 1358 938M1040 910L1030 938M1568 715Q1520 670 1440 682Q1330 710 1325 860M1405 800Q1410 770 1425 775Q1440 785 1440 808M1500 815Q1510 780 1525 788Q1537 800 1537 818M1380 830Q1380 935 1470 938Q1550 930 1557 850M1545 885L1568 905M1515 920L1530 938M1535 905L1560 938M1490 560L1495 590L1463 615L1525 655L1530 600L1562 578L1530 568M1505 605L1515 590M0 585Q35 610 33 660Q25 700 0 695M0 650Q10 670 0 690M0 720Q90 745 102 800Q80 880 0 893M0 725Q30 780 100 800M0 840L30 845Q25 880 0 893M75 938Q100 930 130 938"/>
      <path class="dot" d="M10 798h0"/>
      <path id="s9" d="M61 221h0M109 340h0M8 494h0M190 728h0M499 668h0M826 643h0M1109 580h0"/>
      <path id="m9" d="M176 840h0M593 865h0M993 705h0"/>
      <path id="l9" d="M53 110h0"/>
    </g>
    <g transform="translate(585 1860) scale(.3731 .3333)">
      <path d="M548 58Q590 0 680 5Q800 20 803 130Q790 240 665 233M700 15Q770 60 768 130Q750 215 675 213M710 10Q740 80 660 205M640 100Q660 50 700 15M600 58Q640 15 700 10M735 0Q755 10 745 25M655 232Q655 245 668 235M103 0Q120 40 150 38Q190 35 200 0M60 0L65 58M245 0V50L215 58M325 0L330 58M405 58L430 0M455 0Q450 30 460 58M830 0L825 20Q860 8 893 18L880 0M1120 5L1100 50Q1150 10 1200 5Q1225 5 1228 20Q1235 45 1245 35L1278 0M1365 0Q1400 40 1435 38Q1460 35 1490 0M1425 0L1435 38M950 52L998 33Q1005 100 1030 140L975 163Q980 110 950 52M1030 143Q1035 200 1060 250L1005 275Q1010 210 980 163M1060 255Q1070 320 1092 362L1040 383Q1040 330 1010 275M865 100Q900 50 950 55Q970 60 965 75ZM1105 115L1055 130Q1085 180 1087 245L1138 227Q1135 180 1110 165M1090 245Q1115 300 1118 355L1172 337Q1145 280 1138 227M1095 140Q1100 110 1125 115Q1160 120 1178 132L1120 145L1170 180Q1120 180 1095 150M907 280Q940 235 985 240Q1000 245 1000 260M907 280L970 265Q940 290 930 330Q980 300 1005 265M1313 52Q1350 70 1385 62Q1370 100 1380 138Q1340 120 1308 132Q1325 90 1313 52Z"/>
      <ellipse cx="1349" cy="321" rx="127" ry="142"/><ellipse cx="1271" cy="284" rx="15" ry="16"/><ellipse cx="1407" cy="290" rx="15" ry="16"/><ellipse cx="1325" cy="411" rx="15" ry="16"/><ellipse cx="719" cy="382" rx="38" ry="42"/><ellipse cx="814" cy="405" rx="50" ry="56"/><ellipse cx="887" cy="476" rx="38" ry="42"/>
      <path d="M1230 308L1420 208M1238 380L1465 250M1285 435L1475 332M1270 270Q1275 210 1320 180M1272 300Q1290 370 1320 400M1330 180Q1390 200 1405 275M1410 305Q1440 380 1410 455M1335 425Q1370 460 1410 455M1568 408L1530 400Q1520 402 1522 415L1535 650Q1540 665 1550 660L1568 648M1568 435L1545 427L1553 600M1568 255Q1540 220 1568 185M655 425Q680 415 720 442Q800 450 845 510Q860 550 825 590M845 515Q905 530 905 590Q900 620 880 622L720 540M685 545L665 480Q665 450 690 452Q705 455 712 472Q735 465 750 485Q760 520 685 545M655 495L668 500M905 720L1165 460Q1180 455 1197 480Q1200 495 1185 505L920 735Q905 735 905 720ZM1082 545L1105 575M1125 500L1150 525M880 785L1170 575Q1190 570 1200 600Q1200 610 1185 618L895 802Q880 805 880 785ZM1075 645L1095 675M1130 607L1148 638"/>
      <path d="M415 560Q440 650 480 710Q520 770 578 795L610 822Q625 830 635 815L690 765V730Q685 640 650 580Q630 545 610 540M578 795L685 710M590 808L690 725M650 805L665 795L672 805L658 815ZM690 765L715 755Q750 765 750 795L735 790L700 768M550 630Q555 605 535 615Q520 640 545 645Q575 640 565 610Q540 595 525 615Q515 650 550 663Q590 655 585 615M553 567V580M517 577L525 590M590 577L582 592M497 612L508 617M608 612L597 617M497 655L508 650M608 655L597 650M517 687L525 673M588 687L580 673M552 683V697M738 682L830 657Q838 660 818 745Q812 748 800 720L738 687M55 635L120 652Q125 658 110 720L45 705Q38 700 55 635ZM75 638Q80 600 97 605Q112 615 108 648M235 660L365 645Q390 645 395 665L408 760Q408 785 385 788L250 807Q225 805 220 785L208 695Q210 670 235 660ZM255 712V757M237 722L273 747M237 747L273 722M308 702V747M290 712L326 737M290 737L326 712M361 693V738M343 703L379 728M343 728L379 703M205 560L163 575Q205 585 212 615Q225 575 245 560"/>
      <path d="M80 797Q100 800 108 782Q130 785 135 800L158 793L180 800L185 828Q170 840 190 860L180 875L158 870L155 895L135 885Q125 870 108 875L82 880L85 850Q70 830 80 820ZM275 938Q250 900 255 860Q265 835 285 860Q340 890 338 938M322 878Q360 850 390 880L400 938M398 925Q420 910 430 938M675 828Q660 865 675 870Q640 885 640 905Q650 925 680 923H700Q740 920 728 890Q730 870 720 860Q700 850 675 828M685 893Q725 895 722 865M825 938L880 905Q870 870 875 855Q885 850 890 880Q900 840 915 850L908 885Q930 870 938 880L905 915L918 938M980 938Q940 830 1010 785Q1080 745 1150 800Q1200 860 1165 938M978 852L1165 935M1035 780Q1020 820 1045 838Q1080 850 1110 830Q1150 825 1168 845M1115 782Q1010 840 1020 938M980 915Q1020 890 1060 938"/>
      <path d="M1425 703Q1390 690 1392 650Q1400 610 1443 583Q1480 640 1470 670Q1455 700 1425 703Q1400 690 1410 665L1430 645Q1450 680 1435 697M1425 703Q1415 735 1370 745Q1300 755 1280 735Q1270 705 1405 705M1430 705Q1440 770 1540 800Q1500 730 1430 715M1278 735Q1270 830 1330 868Q1380 895 1450 890Q1540 870 1540 800M1330 868Q1330 895 1370 905Q1430 920 1448 892M1325 870V808Q1360 820 1365 850Q1380 820 1400 805Q1420 840 1410 880Q1430 840 1470 843Q1455 880 1430 885M1365 850Q1360 870 1380 890M1515 935Q1540 930 1568 938M0 730Q50 800 40 870Q30 920 15 938M0 900L20 930"/>
      <path class="dot" d="M1359 777h0M1408 770h0M1449 798h0"/>
      <path id="s10" d="M1229 106h0M1500 221h0M689 299h0M869 200h0M962 397h0M983 517h0M1250 512h0M1352 551h0M1449 494h0M1547 340h0M723 619h0M1131 730h0M1243 847h0M809 865h0M432 825h0M331 562h0"/>
      <path id="m10" d="M814 266h0M1065 464h0M1268 643h0M1201 740h0"/>
      <path id="l10" d="M1491 110h0M524 886h0"/>
    </g>
    <g class="holes">
      <g transform="scale(.3731 .3333)"><use class="s" href="#s1"/><use class="m" href="#m1"/></g>
      <g transform="translate(585 0) scale(.3731 .3333)"><use class="s" href="#s2"/><use class="m" href="#m2"/><use class="l" href="#l2"/></g>
      <g transform="translate(0 320) scale(.3731 .3333)"><use class="s" href="#s3"/><use class="m" href="#m3"/><use class="l" href="#l3"/></g>
      <g transform="translate(585 320) scale(.3731 .3333)"><use class="s" href="#s4"/><use class="m" href="#m4"/><use class="l" href="#l4"/></g>
      <g transform="translate(0 820) scale(.3731 .4145)"><use class="s" href="#s5"/><use class="m" href="#m5"/></g>
      <g transform="translate(585 820) scale(.3731 .4145)"><use class="s" href="#s6"/><use class="m" href="#m6"/><use class="l" href="#l6"/></g>
      <g transform="translate(0 1460) scale(.3731 .3333)"><use class="s" href="#s7"/><use class="m" href="#m7"/><use class="l" href="#l7"/></g>
      <g transform="translate(585 1460) scale(.3731 .3333)"><use class="s" href="#s8"/><use class="m" href="#m8"/><use class="l" href="#l8"/></g>
      <g transform="translate(0 1860) scale(.3731 .3333)"><use class="s" href="#s9"/><use class="m" href="#m9"/><use class="l" href="#l9"/></g>
      <g transform="translate(585 1860) scale(.3731 .3333)"><use class="s" href="#s10"/><use class="m" href="#m10"/><use class="l" href="#l10"/></g>
    </g>
    <!-- marks on the calendars, the astronaut's badge and the crossword -->
    <path d="M0 274Q12 268 12 278Q10 290 0 302L20 296M33 266L22 290L48 284M40 270L46 296M1112 282Q1122 268 1130 276Q1136 284 1116 306L1142 298M1156 266L1146 290L1170 285M1162 268L1168 294M108 1798L104 1806L116 1809M116 1800L112 1812M119 1805Q128 1800 127 1807L118 1813L126 1815M134 704Q136 694 144 698Q142 712 134 704M144 698Q142 708 148 710M266 686V692Q264 698 257 694M332 706L336 692Q344 690 342 704Q348 688 354 696L350 708"/>
  </svg>

  <p class="day">Today</p>
  <p class="notice">
    <svg class="lock" viewBox="0 0 24 32" aria-hidden="true"><path d="M5 14V9Q5 2 12 2T19 9V14" fill="none" stroke="currentColor" stroke-width="3"/><rect y="12" width="24" height="20" rx="4" fill="currentColor"/></svg>
    Messages and calls are end-to-end encrypted. Only people in this chat can read, listen to, or share them. <a class="learn" href="#encryption">Learn more</a>
  </p>

  <article class="bubble sent tail">
    <p>Baby is up at 5 everyday
      <svg class="emoji" viewBox="0 0 58 58" role="img" aria-label="weary face">
        <defs><radialGradient id="face" cx=".5" cy=".35" r=".65"><stop offset="0" stop-color="#fff04d"/><stop offset=".6" stop-color="#ffd02b"/><stop offset="1" stop-color="#f38e0b"/></radialGradient></defs>
        <circle cx="29" cy="29" r="28" fill="url(#face)"/>
        <g fill="none" stroke="#7a4208" stroke-width="2" stroke-linecap="round"><path d="M12 17Q20 16 24 8M34 8Q38 16 46 17"/><path stroke-width="3" d="M13 23Q20 27 25 19M33 19Q38 27 45 23"/></g>
        <path d="M13 44Q14 32 29 32T45 44Q46 47 42 46Q29 43 16 46Q12 47 13 44Z" fill="#8a4b08"/><path d="M17 38Q21 33 29 33T41 38Q29 34 17 38Z" fill="#fff"/>
      </svg></p>
    <p class="meta"><time>1:43&#8239;PM</time><svg class="icon ticks fit" viewBox="1236 1276 124 94" preserveAspectRatio="none" role="img" aria-label="Read"><path d="M1242 1337L1264 1362L1320 1284M1293 1355L1301 1362L1355 1284"/></svg></p>
  </article>

  <article class="bubble received wide">
    <p>That’s exhausting. Let’s make mornings calmer
      <svg class="emoji" viewBox="0 0 60 60" role="img" aria-label="sunrise">
        <defs><linearGradient id="sky" x1="0" y1="0" x2="0" y2="1"><stop offset="0" stop-color="#8f6684"/><stop offset=".35" stop-color="#f2765a"/><stop offset=".65" stop-color="#ffb52e"/><stop offset="1" stop-color="#ffdc45"/></linearGradient><linearGradient id="sea" x1="0" y1="0" x2="0" y2="1"><stop offset="0" stop-color="#f0a022"/><stop offset=".4" stop-color="#c47a42"/><stop offset="1" stop-color="#875062"/></linearGradient></defs>
        <path fill="#f3f3f6" d="M0 0H60V60H0Z"/><path fill="url(#sky)" d="M4 4H56V39H4Z"/><path fill="url(#sea)" d="M4 39H56V56H4Z"/>
        <path fill="#ffd08a" opacity=".5" d="M30 36L12 4H17ZM30 36L23 4H27ZM30 36L34 4H38ZM30 36L44 4H49ZM30 36L4 14V19ZM30 36L56 14V19ZM30 36L4 27V31ZM30 36L56 27V31Z"/>
        <path fill="#fff26b" d="M22 38Q22 29 30 29T38 38Z"/><path fill="#e9932a" opacity=".7" d="M22 39H38V56H22Z"/>
      </svg></p>
    <p>Keep first nap later.</p>
    <p>Add 10 mins to bedtime routine.</p>
    <p>Blackout curtains if possible.</p>
    <p class="meta"><time>1:44&#8239;PM</time></p>
  </article>

  <article class="bubble received tail medium grouped">
    <p>Do you want me to check in <a class="date" href="#event">tomorrow morning at 5 AM</a> so you don’t feel alone?<span class="meta inline"><time>1:44&#8239;PM</time></span></p>
  </article>

  <article class="bubble sent tail">
    <p>Yes please<span class="meta inline"><time>1:44&#8239;PM</time><svg class="icon ticks fit" viewBox="1236 1276 124 94" preserveAspectRatio="none" role="img" aria-label="Read"><path d="M1242 1337L1264 1362L1320 1284M1293 1355L1301 1362L1355 1284"/></svg></span></p>
  </article>

  <article class="bubble received tail medium">
    <p>Got it
      <svg class="emoji" viewBox="0 0 58 58" role="img" aria-label="white heart"><defs><linearGradient id="heart" x1="0" y1="0" x2="0" y2="1"><stop offset="0" stop-color="#f4f4f4"/><stop offset=".5" stop-color="#dcdcdc"/><stop offset="1" stop-color="#cfcfcf"/></linearGradient></defs><path d="M29 10Q35 0 45 1Q57 4 57 17Q57 28 48 38Q40 47 29 57Q18 47 10 38Q1 28 1 17Q1 4 13 1Q23 0 29 10Z" fill="url(#heart)"/></svg>
      I’ll be right here with you.<span class="meta inline"><time>1:44&#8239;PM</time></span></p>
  </article>
</main>

<footer class="composer">
  <button class="plain" type="button" aria-label="Attach"><svg class="icon fit" width="61" height="61" viewBox="108 1045 164 184" preserveAspectRatio="none" aria-hidden="true"><path stroke-width="6" d="M190 1054V1220M116 1137H264"/></svg></button>
  <div class="field">
    <input class="entry" type="text" aria-label="Message">
    <button class="plain" type="button" aria-label="Stickers"><svg class="icon fit" width="56" height="58" viewBox="240 1051 150 174" preserveAspectRatio="none" aria-hidden="true"><path stroke-width="4" d="M314 1059Q380 1057 384 1100Q386 1122 384 1143Q380 1172 326 1215Q318 1218 300 1217Q247 1215 246 1170V1108Q248 1059 314 1059ZM384 1144Q325 1143 324 1185V1215"/></svg></button>
  </div>
  <div class="actions">
    <button class="plain" type="button" aria-label="Payment"><svg class="icon fit" width="62" height="62" viewBox="641 1044 166 186" preserveAspectRatio="none" aria-hidden="true"><g stroke-width="5"><ellipse cx="724" cy="1137" rx="76" ry="85"/><path d="M695 1093H751M695 1117H751M695 1093Q733 1093 733 1117Q733 1142 698 1142L730 1190"/></g></svg></button>
    <button class="plain" type="button" aria-label="Camera"><svg class="icon fit" width="71" height="57" viewBox="960 1052 190 170" preserveAspectRatio="none" aria-hidden="true"><path stroke-width="5" d="M988 1082H1012Q1022 1081 1028 1070Q1034 1059 1046 1059H1066Q1076 1059 1082 1070Q1088 1081 1098 1082H1122Q1143 1082 1143 1105V1195Q1143 1215 1125 1215H985Q967 1215 967 1195V1105Q967 1082 988 1082Z"/><ellipse stroke-width="5" cx="1054" cy="1145" rx="37" ry="42"/><path stroke-width="8" d="M1110 1113h0"/></svg></button>
    <button class="plain" type="button" aria-label="Voice message"><svg class="icon fit" width="49" height="72" viewBox="1300 1024 132 216" preserveAspectRatio="none" aria-hidden="true"><g stroke-width="5"><rect x="1337" y="1032" width="60" height="136" rx="30" ry="33"/><path d="M1307 1132Q1310 1200 1367 1200Q1423 1200 1426 1132M1367 1200V1232"/></g></svg></button>
  </div>
</footer>
</body>
</html>
```
FILE: styles.css
```css
* { box-sizing: border-box; }

body {
  margin: 0;
  min-height: 100vh;
  display: flex;
  flex-direction: column;
  background: #0a0a0a;
  color: #fafafa;
  font-family: Inter, "Liberation Sans", sans-serif;
}

p, h1 { margin: 0; }
a { color: inherit; text-decoration: none; }

.icon {
  display: block;
  fill: none;
  stroke: #fafafa;
  stroke-linecap: round;
  stroke-linejoin: round;
}
.fit * { vector-effect: non-scaling-stroke; }

.plain {
  padding: 0;
  border: 0;
  background: none;
  flex: none;
}

/* Header */
.topbar {
  display: flex;
  align-items: center;
  height: 149px;
  padding: 16px 82px 0 28px;
  background: #101010;
}
.back { display: flex; align-items: center; gap: 30px; }
.back-icon { width: 37px; height: 61px; }
.unread { font-size: 52px; font-weight: 500; }
.avatar { width: 108px; height: 108px; margin: 0 32px 0 50px; flex: none; }
.name { flex: 1; font-size: 48px; font-weight: 700; }
.topbar .plain { padding-bottom: 6px; }
.topbar .plain + .plain { margin-left: 72px; }

/* Conversation */
.chat {
  position: relative;
  flex: 1;
  display: flex;
  flex-direction: column;
  align-items: flex-start;
  gap: 40px;
  padding: 104px 49px 40px 50px;
  overflow: hidden;
}
.chat > * { position: relative; }
.chat > .wallpaper {
  position: absolute;
  inset: 0;
  width: 100%;
  height: 100%;
  fill: none;
  stroke: #222;
  stroke-width: 3px;
  stroke-linecap: round;
  stroke-linejoin: round;
}
.wallpaper * { vector-effect: non-scaling-stroke; }
.wallpaper .dot { stroke-width: 7px; }

/* Rings are round dots in the line colour with a smaller dot on top. */
.wallpaper path[id^="s"] { stroke-width: var(--size, 14px); }
.wallpaper path[id^="m"] { stroke-width: var(--size, 22px); }
.wallpaper path[id^="l"] { stroke-width: var(--size, 29px); }
.holes { stroke: #0a0a0a; }
.holes .s { --size: 8px; }
.holes .m { --size: 16px; }
.holes .l { --size: 23px; }

.day {
  align-self: center;
  padding: 0 62px;
  border-radius: 26px;
  background: #161918;
  font-size: 39px;
  font-weight: 700;
  line-height: 56px;
}
.notice {
  align-self: center;
  max-width: 821px;
  margin-top: 3px;
  padding: 16px 28px 21px;
  border-radius: 22px;
  background: #161918;
  color: #ffd279;
  font-size: 40px;
  font-weight: 500;
  line-height: 54px;
  text-align: center;
}
.lock { width: 24px; height: 32px; margin-right: 6px; vertical-align: -2px; }
.learn { font-weight: 700; }

.bubble {
  display: flow-root;
  padding: 14px 29px 18px;
  border-radius: 36px;
  font-size: 50px;
  font-weight: 500;
  line-height: 66px;
}
.bubble p { display: flow-root; }
.bubble p + p:not(.meta) { margin-top: 66px; }
.sent { align-self: flex-end; background: #144d37; }
.received { background: #242626; }
.wide { max-width: 815px; }
.medium { max-width: 778px; }
.grouped { margin-top: -26px; }

.tail::after {
  content: "";
  position: absolute;
  right: -17px;
  bottom: 0;
  width: 40px;
  height: 50px;
  background: inherit;
  clip-path: path("M0 0H23Q24 34 40 49Q40 50 38 50Q22 50 11 41L0 30Z");
}
.received.tail::after { right: auto; left: -17px; transform: scaleX(-1); }

.bubble .meta {
  display: flex;
  justify-content: flex-end;
  align-items: center;
  gap: 11px;
  margin-top: 18px;
  color: #a5a5a5;
  font-size: 36px;
  line-height: 36px;
}
.bubble .inline { float: right; margin: 33px 0 0 40px; }
.sent .meta { color: #a1b8af; }
.ticks { width: 46px; height: 31px; stroke: #53bdeb; stroke-width: 4px; }
.emoji { width: 58px; height: 58px; margin: 0 2px; vertical-align: -11px; }
.date {
  text-decoration: underline;
  text-decoration-color: #6c6d6d;
  text-decoration-thickness: 5px;
  text-underline-offset: 5px;
}

/* Message box */
.composer {
  display: flex;
  align-items: center;
  gap: 40px;
  padding: 22px 51px 27px 40px;
  background: #101010;
}
.field {
  flex: 1;
  min-width: 0;
  display: flex;
  align-items: center;
  height: 90px;
  padding: 0 33px 0 40px;
  border: 1px solid #3c3c3c;
  border-radius: 45px;
  background: #282828;
}
.entry {
  flex: 1;
  width: 0;
  min-width: 0;
  border: 0;
  outline: 0;
  background: none;
  color: inherit;
  font: inherit;
  font-size: 44px;
}
.actions { display: flex; align-items: center; gap: 57px; margin-left: 20px; }
```
